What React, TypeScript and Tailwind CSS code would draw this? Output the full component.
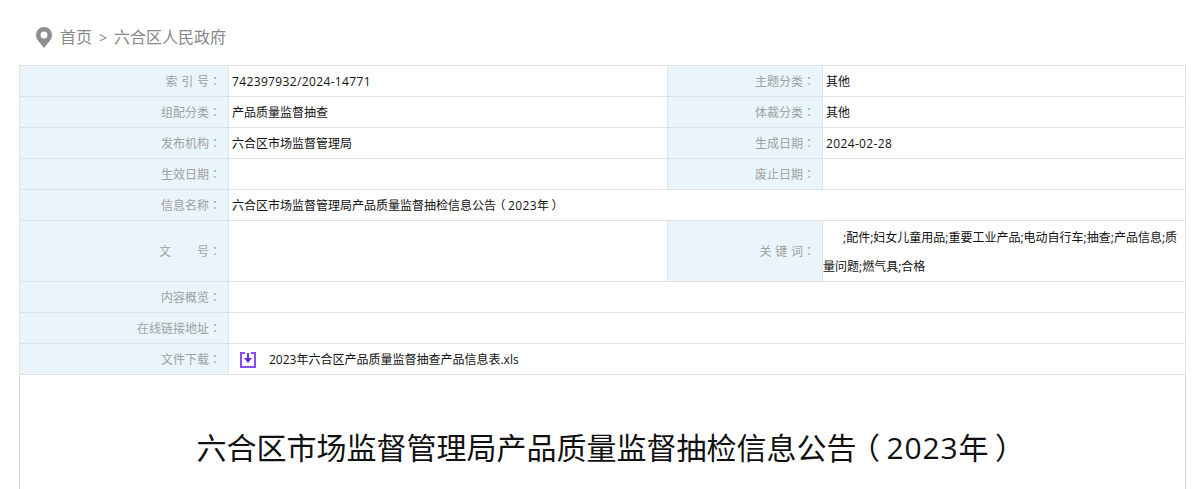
import React from "react";

const font = { fontFamily: '"Open Sans", "Noto Sans CJK SC", sans-serif' };

function Label({ children }: { children: React.ReactNode }) {
  return (
    <td className="border border-[#e1e1e1] bg-[#e9f4fd] pt-[1px] pr-[7px] text-right align-middle text-[12px] whitespace-pre text-[#a0a0a0] [word-spacing:0.6px]">
      {children}
      <span className="font-['Noto_Sans_CJK_TC']">：</span>
    </td>
  );
}

function Value({ children, colSpan }: { children?: React.ReactNode; colSpan?: number }) {
  return (
    <td colSpan={colSpan} className="border border-[#e1e1e1] pt-[1px] pl-[3px] align-middle text-[12px] text-[#111111]">
      {children}
    </td>
  );
}

function Digits({ children }: { children: React.ReactNode }) {
  return <span className="tracking-[0.03em]">{children}</span>;
}

function Paren({ children }: { children: React.ReactNode }) {
  return <span className="inline-block w-[1em] text-center [font-feature-settings:'palt']">{children}</span>;
}

function Pin() {
  return (
    <svg width="16" height="21" viewBox="0 0 16 21" className="shrink-0">
      <path
        fillRule="evenodd"
        fill="#8f8f8f"
        d="M8 0a8 8 0 0 0-8 8c0 2.2.8 3.7 2 5.6L8 21l6-7.4c1.2-1.9 2-3.4 2-5.6a8 8 0 0 0-8-8Zm0 4.5a3.5 3.5 0 1 1 0 7 3.5 3.5 0 0 1 0-7Z"
      />
    </svg>
  );
}

function DownloadIcon() {
  return (
    <svg width="16" height="16" viewBox="0 0 16 16" className="shrink-0">
      <path d="M5 1H1v14h14V1h-4" fill="none" stroke="#8a4df0" strokeWidth="2" />
      <path d="M7 1h2v5h3l-4 5-4-5h3Z" fill="#6a2ce0" />
    </svg>
  );
}

export default function App() {
  return (
    <div className="h-[489px] w-[1203px] overflow-hidden bg-white" style={font}>
      <div className="flex h-[65px] items-start pt-[27px] pl-[36px]">
        <Pin />
        <div className="ml-[8px] text-[16px] leading-[20px] text-[#888888]">
          首页<span className="mx-[7px] text-[14px]">&gt;</span>六合区人民政府
        </div>
      </div>
      <div className="ml-[19px] w-[1167px]">
        <table className="w-full table-fixed border-collapse">
          <colgroup>
            <col className="w-[209px]" />
            <col className="w-[439px]" />
            <col className="w-[155px]" />
            <col />
          </colgroup>
          <tbody>
            <tr className="h-[31px]">
              <Label>{"索 引 号"}</Label>
              <Value><Digits>742397932/2024-14771</Digits></Value>
              <Label>主题分类</Label>
              <Value>其他</Value>
            </tr>
            <tr className="h-[31px]">
              <Label>组配分类</Label>
              <Value>产品质量监督抽查</Value>
              <Label>体裁分类</Label>
              <Value>其他</Value>
            </tr>
            <tr className="h-[31px]">
              <Label>发布机构</Label>
              <Value>六合区市场监督管理局</Value>
              <Label>生成日期</Label>
              <Value><Digits>2024-02-28</Digits></Value>
            </tr>
            <tr className="h-[31px]">
              <Label>生效日期</Label>
              <Value />
              <Label>废止日期</Label>
              <Value />
            </tr>
            <tr className="h-[31px]">
              <Label>信息名称</Label>
              <Value colSpan={3}>
                六合区市场监督管理局产品质量监督抽检信息公告<Paren>（</Paren><Digits>2023</Digits>年<Paren>）</Paren>
              </Value>
            </tr>
            <tr className="h-[61px]">
              <Label>{"文       号"}</Label>
              <Value />
              <Label>{"关 键 词"}</Label>
              <td className="border border-[#e1e1e1] pt-[1px] align-middle text-[12px] leading-[29px] text-[#111111]">
                <span className="ml-[20px]">;配件;妇女儿童用品;重要工业产品;电动自行车;抽查;产品信息;质量问题;燃气具;合格</span>
              </td>
            </tr>
            <tr className="h-[31px]">
              <Label>内容概览</Label>
              <Value colSpan={3} />
            </tr>
            <tr className="h-[31px]">
              <Label>在线链接地址</Label>
              <Value colSpan={3} />
            </tr>
            <tr className="h-[31px]">
              <Label>文件下载</Label>
              <Value colSpan={3}>
                <div className="flex items-center pl-[8px]">
                  <DownloadIcon />
                  <span className="ml-[13px]">2023年六合区产品质量监督抽查产品信息表.xls</span>
                </div>
              </Value>
            </tr>
          </tbody>
        </table>
        <div className="h-[120px] border-x border-[#d5d5d5] pt-[52px] pl-[10px]">
          <h1 className="text-center text-[30px] leading-[42px] font-normal text-[#111111]">
            六合区市场监督管理局产品质量监督抽检信息公告<Paren>（</Paren><Digits>2023</Digits>年<Paren>）</Paren>
          </h1>
        </div>
      </div>
    </div>
  );
}
